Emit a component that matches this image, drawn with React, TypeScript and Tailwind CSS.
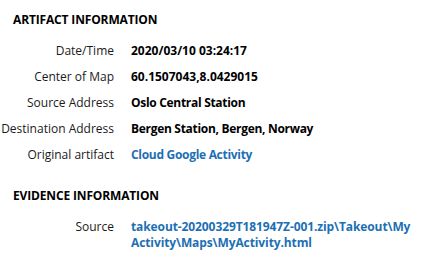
import React from 'react';

const rows: { label: string; value: string; link?: boolean; tight?: boolean }[] = [
    { label: 'Date/Time', value: '2020/03/10 03:24:17' },
    { label: 'Center of Map', value: '60.1507043,8.0429015' },
    { label: 'Source Address', value: 'Oslo Central Station', tight: true },
    { label: 'Destination Address', value: 'Bergen Station, Bergen, Norway', tight: true },
    { label: 'Original artifact', value: 'Cloud Google Activity', link: true, tight: true },
];

const Row = ({ label, children }: { label: string; children: React.ReactNode }) => (
    <div className="flex items-center h-[26px]">
        <div className="w-[114px] shrink-0 text-right text-[#1a1a1a] whitespace-nowrap">{label}</div>
        <div className="ml-[17px] font-bold">{children}</div>
    </div>
);

export default function App() {
    return (
        <div
            className="w-[428px] h-[260px] bg-white text-[12px] text-black overflow-hidden pt-[10px]"
            style={{ fontFamily: '"Open Sans", "Noto Sans", sans-serif' }}
        >
            <h2 className="pl-[13px] h-[20px] leading-[20px] font-bold tracking-[-0.15px]">ARTIFACT INFORMATION</h2>
            <div className="mt-[8px]">
                {rows.map((r) => (
                    <Row key={r.label} label={r.label}>
                        <span
                            className={
                                (r.link ? 'text-[#1c6fb4] ' : '') + (r.tight ? 'tracking-[-0.3px]' : '')
                            }
                        >
                            {r.value}
                        </span>
                    </Row>
                ))}
            </div>
            <h2 className="mt-[18px] pl-[13px] h-[20px] leading-[20px] font-bold tracking-[-0.15px]">
                EVIDENCE INFORMATION
            </h2>
            <div className="flex mt-[13px] leading-[16px]">
                <div className="w-[114px] shrink-0 text-right text-[#1a1a1a]">Source</div>
                <div className="ml-[17px] font-bold text-[#1c6fb4] tracking-[-0.1px]">
                    takeout-20200329T181947Z-001.zip\Takeout\My
                    <br />
                    Activity\Maps\MyActivity.html
                </div>
            </div>
        </div>
    );
}
